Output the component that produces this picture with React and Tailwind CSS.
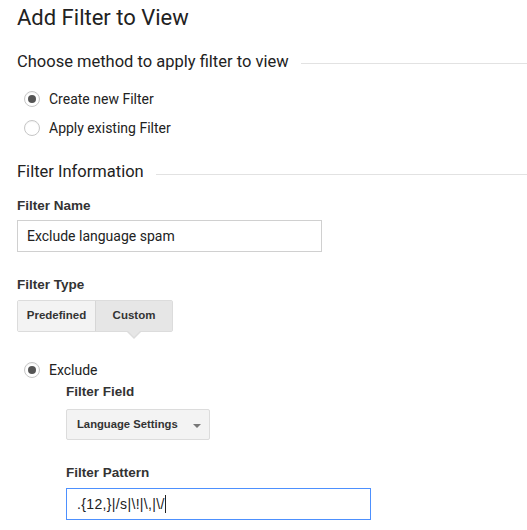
import React from 'react';

const Radio = ({ checked, label }) => (
    <label className="flex items-center gap-[9px] h-[22px]">
        <span className="w-[16px] h-[16px] rounded-full border border-[#c6c6c6] bg-white flex items-center justify-center shadow-[inset_0_1px_1px_rgba(0,0,0,0.05)]">
            {checked && <span className="w-[8px] h-[8px] rounded-full bg-[#555]"></span>}
        </span>
        <span className="text-[14px] leading-[22px] text-[#222]">{label}</span>
    </label>
);

const SectionTitle = ({ children, lineOffset }) => (
    <div className="flex items-center gap-3 h-[20px]">
        <h2 className="text-[16.5px] leading-[20px] text-[#222] whitespace-nowrap">{children}</h2>
        <div className={`flex-1 h-px bg-[#e2e2e2] ${lineOffset}`}></div>
    </div>
);

const Label = ({ children }) => (
    <div className="text-[13.5px] leading-[16px] font-bold text-[#333] font-['Liberation_Sans',Arial,sans-serif]">{children}</div>
);

export default function App() {
    return (
        <div className="w-[527px] h-[530px] bg-white pl-[17px] font-['Roboto',sans-serif] overflow-hidden">
            <h1 className="text-[22px] text-[#222] pt-[5px] leading-[26px]">Add Filter to View</h1>

            <div className="mt-[21px]">
                <SectionTitle lineOffset="mt-[3px]">Choose method to apply filter to view</SectionTitle>
            </div>

            <div className="mt-[16px] ml-[7px] flex flex-col gap-[7px]">
                <Radio checked label="Create new Filter" />
                <Radio label="Apply existing Filter" />
            </div>

            <div className="mt-[23px]">
                <SectionTitle lineOffset="mt-[4px]">Filter Information</SectionTitle>
            </div>

            <div className="mt-[16px]">
                <Label>Filter Name</Label>
                <div className="mt-[6px] w-[305px] h-[32px] border border-[#d0d0d0] flex items-center px-[9px] text-[14px] text-[#222]">
                    Exclude language spam
                </div>
            </div>

            <div className="mt-[25px]">
                <Label>Filter Type</Label>
                <div className="mt-[7px] relative flex w-[156px] h-[32px] border border-[#dcdcdc] rounded-[2px] text-[11.5px] font-bold text-[#333] font-['Liberation_Sans',Arial,sans-serif]">
                    <div className="w-[77px] flex items-center justify-center bg-[#f3f3f3]">Predefined</div>
                    <div className="flex-1 flex items-center justify-center bg-[#e6e6e6] border-l border-[#d6d6d6]">Custom</div>
                    <div className="absolute left-[108px] top-[30px] w-0 h-0 border-l-[8px] border-r-[8px] border-t-[8px] border-l-transparent border-r-transparent border-t-[#dcdcdc]"></div>
                    <div className="absolute left-[109px] top-[29px] w-0 h-0 border-l-[7px] border-r-[7px] border-t-[7px] border-l-transparent border-r-transparent border-t-[#e6e6e6]"></div>
                </div>
            </div>

            <div className="mt-[27px] ml-[7px]">
                <Radio checked label="Exclude" />
            </div>

            <div className="ml-[49px] mt-[3px]">
                <Label>Filter Field</Label>
                <div className="mt-[9px] w-[144px] h-[31px] border border-[#dcdcdc] rounded-[2px] bg-[#f3f3f3] flex items-center justify-between pl-[10px] pr-[8px] text-[11.25px] font-bold text-[#333] font-['Liberation_Sans',Arial,sans-serif]">
                    <span>Language Settings</span>
                    <span className="w-0 h-0 border-l-[4px] border-r-[4px] border-t-[4px] border-l-transparent border-r-transparent border-t-[#777] mt-[2px]"></span>
                </div>

                <div className="mt-[25px]">
                    <Label>Filter Pattern</Label>
                    <div className="mt-[7px] w-[305px] h-[32px] border border-[#4d90fe] flex items-center px-[10px] text-[14px] tracking-[0.35px] text-[#222] font-['Liberation_Sans',Arial,sans-serif]">
                        <span>.{'{'}12,{'}'}|/s|\!|\,|\/</span>
                        <span className="w-px h-[18px] bg-[#222]"></span>
                    </div>
                </div>
            </div>
        </div>
    );
}
